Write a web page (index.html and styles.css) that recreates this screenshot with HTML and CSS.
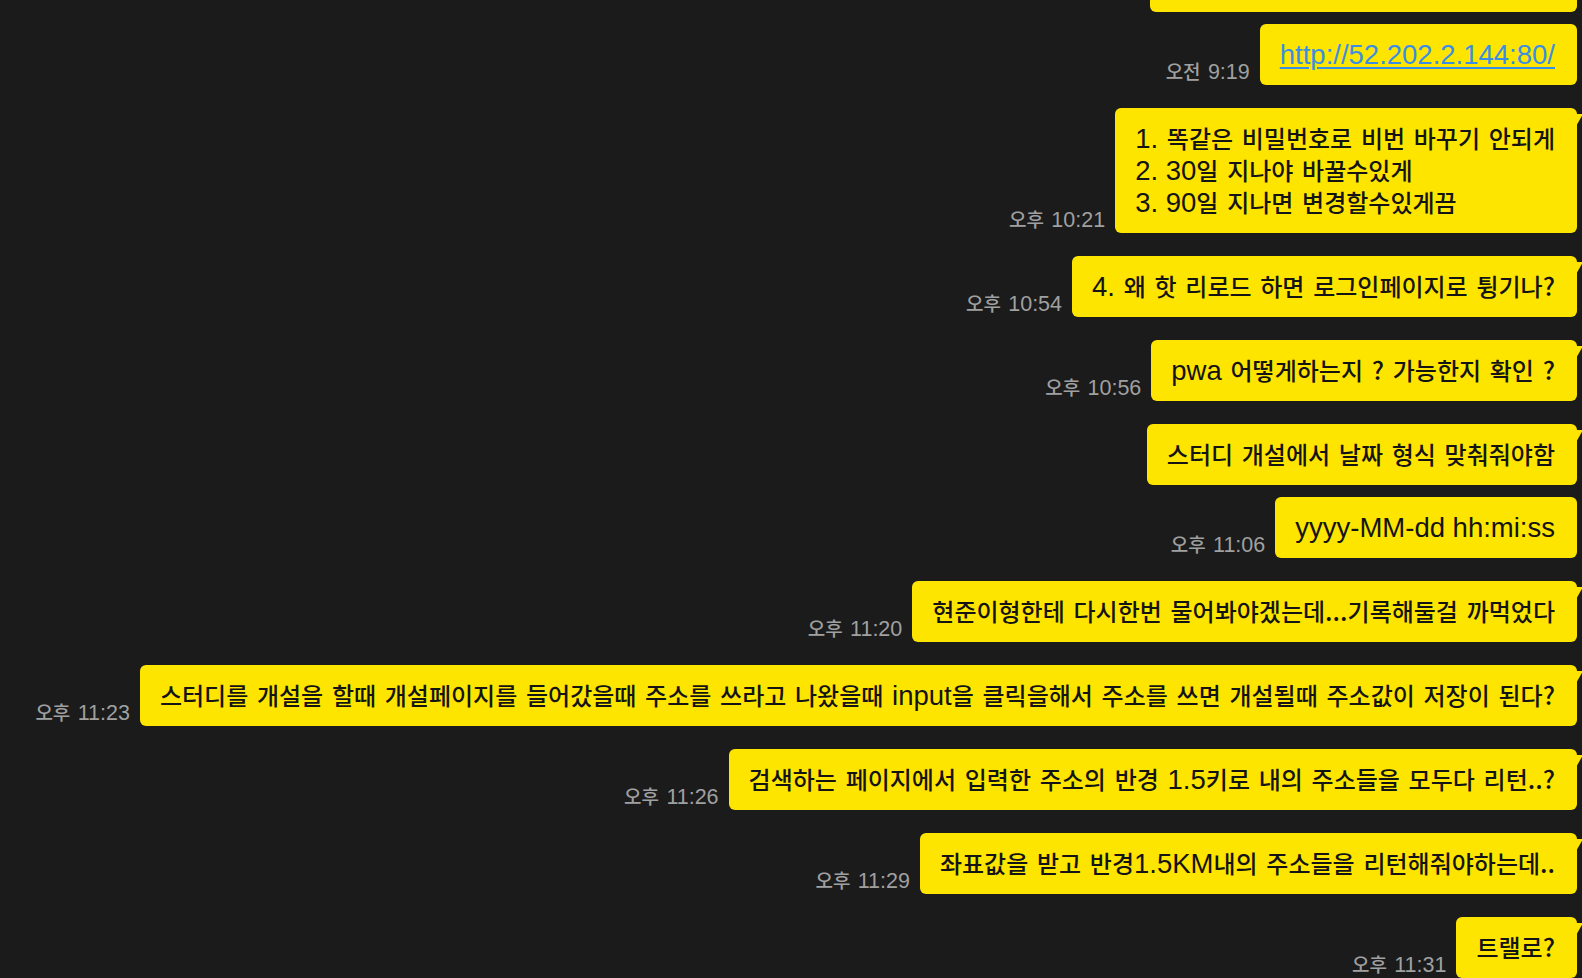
FILE: index.html
```html
<!DOCTYPE html>
<html lang="ko">
<head>
<meta charset="utf-8">
<title>채팅</title>
<link rel="stylesheet" href="styles.css">
</head>
<body>
<main class="chat">
  <div class="row">
    <div class="bubble cut" aria-hidden="true"></div>
  </div>
  <div class="row cont">
    <span class="time">오전 <span class="num">9:19</span></span>
    <div class="bubble"><a class="link en" href="#">http://52.202.2.144:80/</a></div>
  </div>
  <div class="row">
    <span class="time">오후 <span class="num">10:21</span></span>
    <div class="bubble tail"><span class="en">1.</span> 똑같은 비밀번호로 비번 바꾸기 안되게<br><span class="en">2. 30</span>일 지나야 바꿀수있게<br><span class="en">3. 90</span>일 지나면 변경할수있게끔</div>
  </div>
  <div class="row">
    <span class="time">오후 <span class="num">10:54</span></span>
    <div class="bubble tail"><span class="en">4.</span> 왜 핫 리로드 하면 로그인페이지로 튕기나<span class="q">?</span></div>
  </div>
  <div class="row">
    <span class="time">오후 <span class="num">10:56</span></span>
    <div class="bubble tail"><span class="en">pwa</span> 어떻게하는지 <span class="q">?</span> 가능한지 확인 <span class="q">?</span></div>
  </div>
  <div class="row">
    <div class="bubble tail">스터디 개설에서 날짜 형식 맞춰줘야함</div>
  </div>
  <div class="row cont">
    <span class="time">오후 <span class="num">11:06</span></span>
    <div class="bubble"><span class="en">yyyy-MM-dd hh:mi:ss</span></div>
  </div>
  <div class="row">
    <span class="time">오후 <span class="num">11:20</span></span>
    <div class="bubble tail">현준이형한테 다시한번 물어봐야겠는데<span class="q">...</span>기록해둘걸 까먹었다</div>
  </div>
  <div class="row">
    <span class="time">오후 <span class="num">11:23</span></span>
    <div class="bubble tail">스터디를 개설을 할때 개설페이지를 들어갔을때 주소를 쓰라고 나왔을때 <span class="en">input</span>을 클릭을해서 주소를 쓰면 개설될때 주소값이 저장이 된다<span class="q">?</span></div>
  </div>
  <div class="row">
    <span class="time">오후 <span class="num">11:26</span></span>
    <div class="bubble tail">검색하는 페이지에서 입력한 주소의 반경 <span class="en">1.5</span>키로 내의 주소들을 모두다 리턴<span class="q">..?</span></div>
  </div>
  <div class="row">
    <span class="time">오후 <span class="num">11:29</span></span>
    <div class="bubble tail">좌표값을 받고 반경<span class="en">1.5KM</span>내의 주소들을 리턴해줘야하는데<span class="q">..</span></div>
  </div>
  <div class="row">
    <span class="time">오후 <span class="num">11:31</span></span>
    <div class="bubble tail">트랠로<span class="q">?</span></div>
  </div>
</main>
</body>
</html>
```

FILE: styles.css
```css
html, body {
  margin: 0;
  padding: 0;
  height: 100%;
  overflow: hidden;
  background: #1b1b1b;
}

body {
  font-family: "Noto Sans CJK KR", sans-serif;
}

.chat {
  display: flex;
  flex-direction: column;
  align-items: flex-end;
  margin-top: -49px;
  padding-right: 5px;
}

.row {
  display: flex;
  align-items: flex-end;
  gap: 10px;
  margin-top: 23px;
}

.row:first-child {
  margin-top: 0;
}

.row.cont {
  margin-top: 12px;
}

.time {
  font-family: "Noto Sans CJK KR", sans-serif;
  font-size: 19px;
  font-weight: 500;
  line-height: 22px;
  word-spacing: 2px;
  color: #a0a0a0;
  margin-bottom: 2px;
  white-space: nowrap;
}

.time .num {
  font-family: "Liberation Sans", sans-serif;
  font-size: 21.5px;
  line-height: 1;
  word-spacing: 0;
}

.bubble {
  position: relative;
  background: #fee500;
  color: #141414;
  border-radius: 6px;
  padding: 14px 22px 15px 20px;
  font-family: "Noto Sans CJK KR", sans-serif;
  font-size: 24px;
  font-weight: 500;
  line-height: 32px;
  word-spacing: 2px;
  white-space: nowrap;
}

.bubble.cut {
  width: 427px;
  height: 32px;
  box-sizing: content-box;
  padding-left: 0;
  padding-right: 0;
}

.bubble.tail::after {
  content: "";
  position: absolute;
  right: -6px;
  top: 6px;
  width: 8px;
  height: 14px;
  background: #fee500;
  clip-path: polygon(0 0, 100% 0, 0 100%);
}

.en {
  font-family: "Liberation Sans", sans-serif;
  font-size: 27.5px;
  font-weight: 400;
  line-height: 1;
  word-spacing: 0;
}

.q {
  font-size: 25px;
  line-height: 1;
}

.link {
  color: #3a8ee6;
  text-decoration: underline;
  text-underline-offset: 3px;
}
```
